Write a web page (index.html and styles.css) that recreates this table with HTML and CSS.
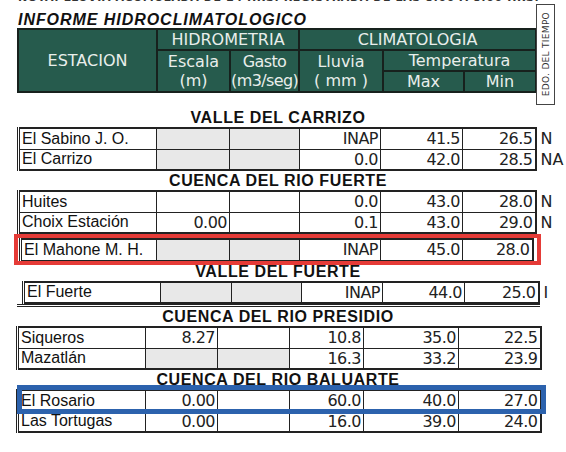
FILE: index.html
```html
<!DOCTYPE html>
<html lang="es">
<head>
    <meta charset="UTF-8">
    <meta name="viewport" content="width=device-width, initial-scale=1.0">
    <title>Informe Hidroclimatologico</title>
    <link rel="stylesheet" href="styles.css">
</head>
<body>
<div class="sheet">
    <div class="cutline"><span>NOTA: LLUVIA ACUMULADA DE 24 HRS. REGISTRADA DE LAS 8:00 A 8:00 HRS. 26/06/2022</span></div>

    <div class="head">
        <div class="head-main">
            <h1 class="title">INFORME HIDROCLIMATOLOGICO</h1>
            <table class="hdr">
                <colgroup>
                    <col class="c1"><col class="c2"><col class="c3"><col class="c4"><col class="c5"><col class="c6">
                </colgroup>
                <tr class="r1">
                    <td rowspan="3">ESTACION</td>
                    <td colspan="2">HIDROMETRIA</td>
                    <td colspan="3">CLIMATOLOGIA</td>
                </tr>
                <tr class="r2">
                    <td rowspan="2">Escala<br>(m)</td>
                    <td rowspan="2" class="tight">Gasto<br>(m3/seg)</td>
                    <td rowspan="2">Lluvia<br>( mm )</td>
                    <td colspan="2">Temperatura</td>
                </tr>
                <tr class="r3">
                    <td>Max</td>
                    <td>Min</td>
                </tr>
            </table>
        </div>
        <div class="edo"><span>EDO. DEL TIEMPO</span></div>
    </div>

    <!-- Valle del Carrizo -->
    <h2 class="sec first">VALLE DEL CARRIZO</h2>
    <table class="dat t-a">
        <colgroup>
            <col class="c1"><col class="c2"><col class="c3"><col class="c4"><col class="c5"><col class="c6"><col class="c7">
        </colgroup>
        <tr>
            <td class="nm">El Sabino J. O.</td><td class="na"></td><td class="na"></td>
            <td class="num">INAP</td><td class="num">41.5</td><td class="num end">26.5</td><td class="side">N</td>
        </tr>
        <tr>
            <td class="nm">El Carrizo</td><td class="na"></td><td class="na"></td>
            <td class="num">0.0</td><td class="num">42.0</td><td class="num end">28.5</td><td class="side">NA</td>
        </tr>
    </table>

    <!-- Cuenca del Rio Fuerte -->
    <h2 class="sec">CUENCA DEL RIO FUERTE</h2>
    <table class="dat t-a">
        <colgroup>
            <col class="c1"><col class="c2"><col class="c3"><col class="c4"><col class="c5"><col class="c6"><col class="c7">
        </colgroup>
        <tr>
            <td class="nm">Huites</td><td></td><td></td>
            <td class="num">0.0</td><td class="num">43.0</td><td class="num end">28.0</td><td class="side">N</td>
        </tr>
        <tr>
            <td class="nm">Choix Estación</td><td class="num">0.00</td><td></td>
            <td class="num">0.1</td><td class="num">43.0</td><td class="num end">29.0</td><td class="side">N</td>
        </tr>
    </table>
    <div class="mahone">
        <table class="dat t-b">
            <colgroup>
                <col class="c1"><col class="c2"><col class="c3"><col class="c4"><col class="c5"><col class="c6">
            </colgroup>
            <tr>
                <td class="nm">El Mahone M. H.</td><td class="na"></td><td class="na"></td>
                <td class="num">INAP</td><td class="num">45.0</td><td class="num end">28.0</td>
            </tr>
        </table>
        <div class="box-red"></div>
    </div>

    <!-- Valle del Fuerte -->
    <h2 class="sec">VALLE DEL FUERTE</h2>
    <div class="fuerte">
        <table class="dat t-c">
            <colgroup>
                <col class="c1"><col class="c2"><col class="c3"><col class="c4"><col class="c5"><col class="c6"><col class="c7">
            </colgroup>
            <tr>
                <td class="nm">El Fuerte</td><td class="na"></td><td class="na"></td>
                <td class="num">INAP</td><td class="num">44.0</td><td class="num end">25.0</td><td class="side">I</td>
            </tr>
        </table>
    </div>

    <!-- Cuenca del Rio Presidio -->
    <h2 class="sec">CUENCA DEL RIO PRESIDIO</h2>
    <table class="dat t-d">
        <colgroup>
            <col class="c1"><col class="c2"><col class="c3"><col class="c4"><col class="c5"><col class="c6">
        </colgroup>
        <tr>
            <td class="nm">Siqueros</td><td class="num">8.27</td><td></td>
            <td class="num">10.8</td><td class="num">35.0</td><td class="num end">22.5</td>
        </tr>
        <tr>
            <td class="nm">Mazatlán</td><td class="na"></td><td class="na"></td>
            <td class="num">16.3</td><td class="num">33.2</td><td class="num end">23.9</td>
        </tr>
    </table>

    <!-- Cuenca del Rio Baluarte -->
    <h2 class="sec">CUENCA DEL RIO BALUARTE</h2>
    <div class="baluarte">
        <table class="dat t-d">
            <colgroup>
                <col class="c1"><col class="c2"><col class="c3"><col class="c4"><col class="c5"><col class="c6">
            </colgroup>
            <tr>
                <td class="nm">El Rosario</td><td class="num">0.00</td><td></td>
                <td class="num">60.0</td><td class="num">40.0</td><td class="num end">27.0</td>
            </tr>
            <tr>
                <td class="nm">Las Tortugas</td><td class="num">0.00</td><td></td>
                <td class="num">16.0</td><td class="num">39.0</td><td class="num end">24.0</td>
            </tr>
        </table>
        <div class="box-blue"></div>
    </div>
</div>
</body>
</html>
```

FILE: styles.css
```css
body {
    margin: 0;
    background-color: #fff;
    font-family: "Liberation Sans", Arial, sans-serif;
    color: #111;
}
.sheet {
    width: 566px;
    height: 452px;
    overflow: hidden;
}

/* linea cortada arriba */
.cutline {
    height: 5px;
    width: 522px;
    margin-left: 18px;
    overflow: hidden;
}
.cutline span {
    display: block;
    margin-top: -8px;
    font: bold 11px/12px "DejaVu Sans", sans-serif;
    letter-spacing: 0.6px;
    white-space: nowrap;
    color: #333;
}

/* encabezado */
.head {
    display: flex;
    align-items: flex-start;
}
.head-main {
    margin-left: 17px;
    width: 518px;
}
.title {
    margin: 0;
    padding: 6px 0 0 1px;
    font: italic bold 16px/17px "Liberation Sans", Arial, sans-serif;
    letter-spacing: 0.95px;
    color: #111;
}
.hdr {
    width: 518px;
    border-collapse: collapse;
    table-layout: fixed;
    background-color: #265b4d;
    color: #e9eeeb;
    font: 16px/19px "DejaVu Sans", sans-serif;
}
.hdr td {
    border: 2px solid #17211d;
    text-align: center;
    padding: 0;
    white-space: nowrap;
    overflow: hidden;
}
.hdr td.tight { letter-spacing: -0.6px; }
.hdr .r1 td { height: 19px; }
.hdr .r2 td { height: 18px; }
.hdr .r3 td { height: 17px; }
.hdr col.c1 { width: 139px; }
.hdr col.c2 { width: 73px; }
.hdr col.c3 { width: 69px; }
.hdr col.c4 { width: 84px; }
.hdr col.c5 { width: 81px; }
.hdr col.c6 { width: 72px; }

.edo {
    width: 19px;
    height: 101px;
    margin: -1px 0 0 1px;
    box-sizing: border-box;
    border: 1.5px solid #444;
    display: flex;
    align-items: center;
    justify-content: center;
}
.edo span {
    writing-mode: vertical-rl;
    transform: rotate(180deg);
    font: 9px "DejaVu Sans", sans-serif;
    letter-spacing: 0.3px;
    white-space: nowrap;
    color: #333;
}

/* titulos de seccion */
.sec {
    margin: 0 0 0 17px;
    width: 522px;
    font: bold 16px/19px "Liberation Sans", Arial, sans-serif;
    letter-spacing: 0.6px;
    text-align: center;
    color: #111;
}
.sec.first {
    margin-top: 3px;
}

/* tablas de datos */
.dat {
    border-collapse: collapse;
    table-layout: fixed;
    font: 16px "Liberation Sans", Arial, sans-serif;
    color: #111;
}
.dat td {
    border: 1px solid #222;
    height: 19.5px;
    padding: 0 2px;
    white-space: nowrap;
    overflow: hidden;
}
.dat tr:first-child td { border-top-width: 2px; }
.dat tr:last-child td { border-bottom-width: 2px; }
.dat td.nm {
    border-left: 3px double #222;
    text-align: left;
}
.dat td.num {
    text-align: right;
    font-family: "DejaVu Sans", sans-serif;
    letter-spacing: -0.5px;
    color: #222;
}
.dat td.end { border-right-width: 2px; }
.dat td.na { background-color: #e8e8e8; }
.dat td.side {
    border: none;
    padding-left: 4px;
    font-family: "DejaVu Sans", sans-serif;
    color: #222;
}

.t-a { margin-left: 17px; width: 547px; }
.t-a col.c1 { width: 138px; }
.t-a col.c2 { width: 73px; }
.t-a col.c3 { width: 70px; }
.t-a col.c4 { width: 81px; }
.t-a col.c5 { width: 82px; }
.t-a col.c6 { width: 73px; }
.t-a col.c7 { width: 30px; }

.t-b { width: 512px; }
.t-b col.c1 { width: 136px; }
.t-b col.c2 { width: 73px; }
.t-b col.c3 { width: 70px; }
.t-b col.c4 { width: 81px; }
.t-b col.c5 { width: 82px; }
.t-b col.c6 { width: 70px; }

.t-c { width: 535px; }
.t-c col.c1 { width: 137px; }
.t-c col.c2 { width: 71px; }
.t-c col.c3 { width: 70px; }
.t-c col.c4 { width: 81px; }
.t-c col.c5 { width: 82px; }
.t-c col.c6 { width: 74px; }
.t-c col.c7 { width: 20px; }

.t-d { width: 523px; }
.t-d col.c1 { width: 128px; }
.t-d col.c2 { width: 72px; }
.t-d col.c3 { width: 72px; }
.t-d col.c4 { width: 74px; }
.t-d col.c5 { width: 95px; }
.t-d col.c6 { width: 82px; }
.sheet > .t-d { margin-left: 16px; }

/* filas marcadas */
.mahone {
    position: relative;
    margin: 4px 0 0 19px;
    width: 512px;
}
.box-red {
    position: absolute;
    top: -4px;
    left: -5px;
    width: 527px;
    height: 31px;
    box-sizing: border-box;
    border: 4px solid #e53b37;
}
.fuerte {
    margin-left: 17px;
    width: 523px;
    padding-left: 5px;
    box-sizing: border-box;
    border-bottom: 3px double #222;
}
.baluarte {
    position: relative;
    margin-left: 16px;
    width: 523px;
}
.box-blue {
    position: absolute;
    top: -4px;
    left: 1px;
    width: 529px;
    height: 29px;
    box-sizing: border-box;
    border: 5px solid #2c62ad;
}
```
